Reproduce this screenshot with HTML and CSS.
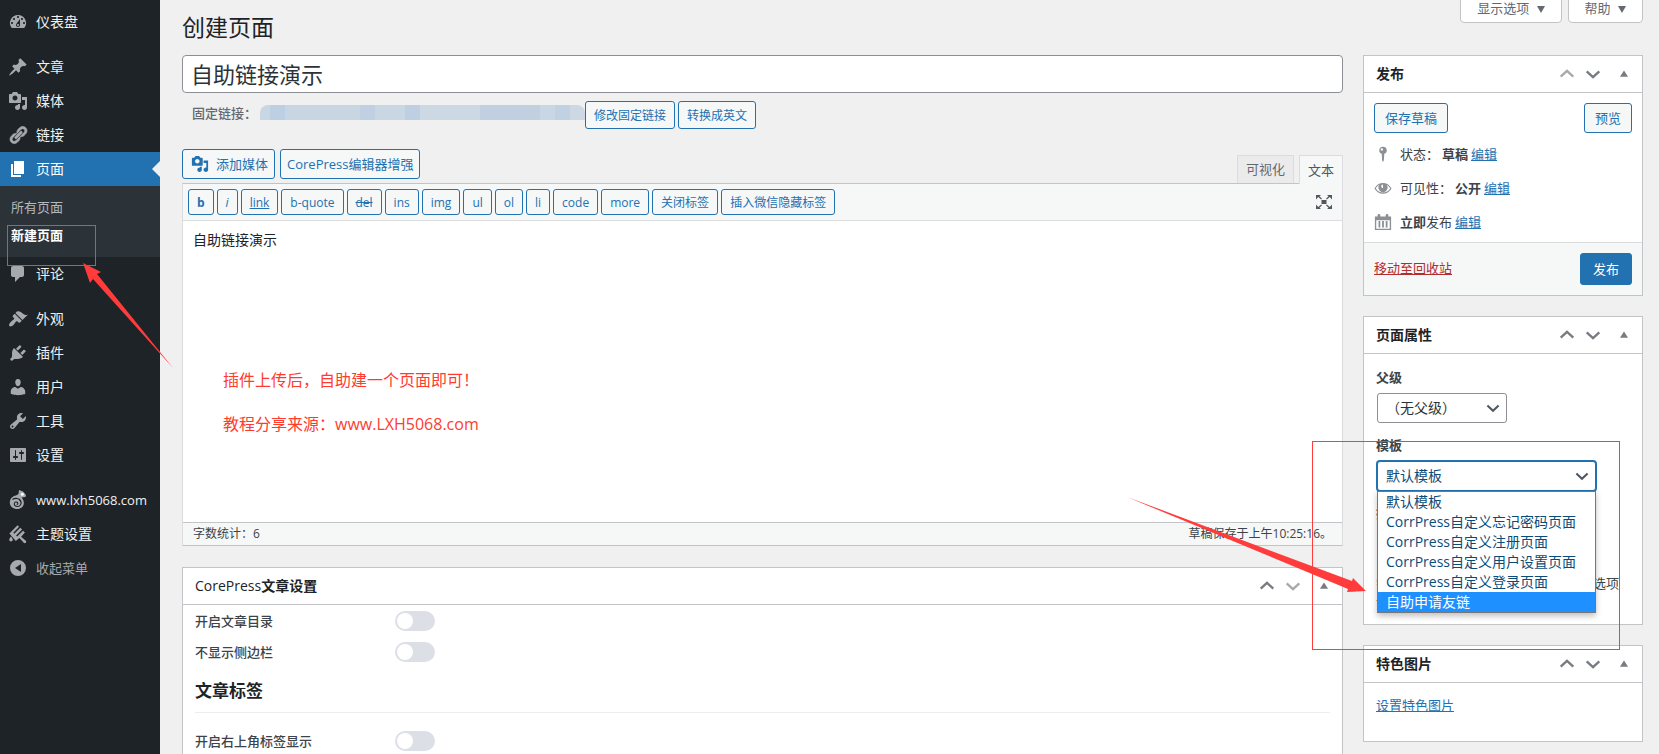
FILE: index.html
```html
<!DOCTYPE html>
<html lang="zh-CN">
<head>
  <meta charset="UTF-8">
  <meta name="viewport" content="width=device-width, initial-scale=1.0">
  <title>创建页面</title>
  <link rel="stylesheet" href="styles.css">
</head>
<body>

<!-- shared icons -->
<svg class="sprite" aria-hidden="true">
  <symbol id="media" viewBox="0 0 20 20"><path d="M13 11V4c0-.55-.45-1-1-1h-1.67L9 1H5L3.67 3H2c-.55 0-1 .45-1 1v7c0 .55.45 1 1 1h10c.55 0 1-.45 1-1zM7 4.5c1.38 0 2.5 1.12 2.5 2.5S8.38 9.5 7 9.5 4.5 8.38 4.5 7 5.62 4.5 7 4.5zM14 6h5v10.5c0 1.38-1.12 2.5-2.5 2.5S14 17.88 14 16.5s1.12-2.5 2.5-2.5c.17 0 .34.02.5.05V9h-3V6zm-4 8.05V13h2v3.5c0 1.38-1.12 2.5-2.5 2.5S7 17.88 7 16.5 8.12 14 9.5 14c.17 0 .34.02.5.05z"/></symbol>
  <symbol id="up" viewBox="0 0 20 20"><path d="M3 13l7-6.500 7 6.500" fill="none" stroke="currentColor" stroke-width="2.6"/></symbol>
  <symbol id="down" viewBox="0 0 20 20"><path d="M3 7l7 6.500L17 7" fill="none" stroke="currentColor" stroke-width="2.6"/></symbol>
  <symbol id="toggle" viewBox="0 0 20 20"><path d="M5.500 13L10 6l4.500 7z"/></symbol>
</svg>

<div class="layout">
  <nav class="menu">
    <a class="menu-item" href="#"><svg class="icon" viewBox="0 0 20 20"><path d="M3.76 16h12.48A7.998 7.998 0 0 0 10 3a7.998 7.998 0 0 0-6.24 13zM10 4c.55 0 1 .45 1 1s-.45 1-1 1-1-.45-1-1 .45-1 1-1zM6 6c.55 0 1 .45 1 1s-.45 1-1 1-1-.45-1-1 .45-1 1-1zm8 0c.55 0 1 .45 1 1s-.45 1-1 1-1-.45-1-1 .45-1 1-1zm-5.37 5.55L12 7v6c0 1.1-.9 2-2 2s-2-.9-2-2c0-.57.24-1.08.63-1.45zM4 10c.55 0 1 .45 1 1s-.45 1-1 1-1-.45-1-1 .45-1 1-1zm12 0c.55 0 1 .45 1 1s-.45 1-1 1-1-.45-1-1 .45-1 1-1zm-5 3c0-.55-.45-1-1-1s-1 .45-1 1 .45 1 1 1 1-.45 1-1z"/></svg>仪表盘</a>
    <div class="separator"></div>
    <a class="menu-item" href="#"><svg class="icon" viewBox="0 0 20 20"><path d="M10.44 3.02l1.82-1.82 6.36 6.35-1.83 1.82c-1.05-.68-2.48-.57-3.41.36l-.75.75c-.92.93-1.04 2.35-.35 3.41l-1.83 1.82-2.41-2.41-2.8 2.79c-.42.42-3.38 2.71-3.8 2.29s1.86-3.39 2.28-3.81l2.79-2.79L4.1 9.36l1.83-1.82c1.05.69 2.48.57 3.4-.36l.75-.75c.93-.92 1.05-2.35.36-3.41z"/></svg>文章</a>
    <a class="menu-item" href="#"><svg class="icon"><use href="#media"/></svg>媒体</a>
    <a class="menu-item" href="#"><svg class="icon" viewBox="0 0 20 20"><path stroke="currentColor" stroke-width=".7" d="M17.74 2.76c1.68 1.69 1.68 4.41 0 6.1l-1.53 1.52c-1.12 1.12-2.7 1.47-4.14 1.09l2.62-2.61.76-.77.76-.76c.84-.84.84-2.2 0-3.04-.84-.85-2.2-.85-3.04 0l-.77.76-3.38 3.38c-.37-1.44-.02-3.02 1.1-4.14l1.52-1.53c1.69-1.68 4.42-1.68 6.1 0zM8.59 13.43l5.34-5.34c.42-.42.42-1.1 0-1.52-.44-.43-1.13-.39-1.53 0l-5.33 5.34c-.42.42-.42 1.1 0 1.52.44.43 1.13.39 1.52 0zm-.76 2.29l4.14-4.15c.38 1.44.03 3.02-1.09 4.14l-1.52 1.53c-1.69 1.68-4.41 1.68-6.1 0-1.68-1.68-1.68-4.42 0-6.1l1.53-1.52c1.12-1.12 2.7-1.47 4.14-1.1l-4.14 4.15c-.85.84-.85 2.2 0 3.05.84.84 2.2.84 3.04 0z"/></svg>链接</a>
    <a class="menu-item current" href="#"><svg class="icon" viewBox="0 0 20 20"><path d="M6 15V2h10v13H6zm-1 1h8v2H3V5h2v11z"/></svg>页面</a>
    <div class="submenu">
      <a class="submenu-item" href="#">所有页面</a>
      <a class="submenu-item active" href="#">新建页面</a>
    </div>
    <a class="menu-item" href="#"><svg class="icon" viewBox="0 0 20 20"><path d="M5 2h9c1.1 0 2 .9 2 2v7c0 1.1-.9 2-2 2h-2l-5 5v-5H5c-1.1 0-2-.9-2-2V4c0-1.1.9-2 2-2z"/></svg>评论</a>
    <div class="separator"></div>
    <a class="menu-item" href="#"><svg class="icon" viewBox="0 0 20 20"><path d="M14.48 11.06L7.41 3.99l1.5-1.5c.5-.56 2.3-.47 3.51.32 1.21.8 1.43 1.28 2.91 2.1 1.18.64 2.45 1.26 4.45.85zm-.71.71L6.7 4.7 4.93 6.47c-.39.39-.39 1.02 0 1.41l1.06 1.06c.39.39.39 1.03 0 1.42-.6.6-1.43 1.11-2.21 1.69-.35.26-.7.53-1.01.84C1.43 14.23.4 16.08 1.4 17.07c.99 1 2.84-.03 4.18-1.36.31-.31.58-.66.85-1.02.57-.78 1.08-1.61 1.69-2.21.39-.39 1.02-.39 1.41 0l1.06 1.06c.39.39 1.02.39 1.41 0z"/></svg>外观</a>
    <a class="menu-item" href="#"><svg class="icon" viewBox="0 0 20 20"><path d="M13.11 4.36L9.87 7.6 8 5.73l3.24-3.24c.35-.34 1.05-.2 1.56.32.52.51.66 1.21.31 1.55zm-8 1.77l.91-1.12 9.01 9.01-1.19.84c-.71.71-2.63 1.16-3.82 1.16H6.14L4.9 17.26c-.59.59-1.54.59-2.12 0-.59-.58-.59-1.53 0-2.12l1.24-1.24v-3.88c0-1.13.4-3.19 1.09-3.89zm7.26 3.97l3.24-3.24c.34-.35 1.04-.21 1.55.31.52.51.66 1.21.31 1.55l-3.24 3.25z"/></svg>插件</a>
    <a class="menu-item" href="#"><svg class="icon" viewBox="0 0 20 20"><path d="M10 9.25c-2.27 0-2.73-3.44-2.73-3.44C7 4.02 7.82 2 9.97 2c2.16 0 2.98 2.02 2.71 3.81 0 0-.41 3.44-2.68 3.44zm0 2.57L12.72 10c2.39 0 4.52 2.33 4.52 4.53v2.49s-3.65 1.13-7.24 1.13c-3.65 0-7.24-1.13-7.24-1.13v-2.49c0-2.25 1.94-4.48 4.47-4.48z"/></svg>用户</a>
    <a class="menu-item" href="#"><svg class="icon" viewBox="0 0 20 20"><path d="M16.68 9.77c-1.34 1.34-3.3 1.67-4.95.99l-5.41 6.52c-.99.99-2.59.99-3.58 0s-.99-2.59 0-3.57l6.52-5.42c-.68-1.65-.35-3.61.99-4.95 1.28-1.28 3.12-1.62 4.72-1.06l-2.89 2.89 2.82 2.82 2.86-2.87c.53 1.58.18 3.39-1.08 4.65zM3.81 16.21c.4.39 1.04.39 1.43 0 .4-.4.4-1.04 0-1.43-.39-.4-1.03-.4-1.43 0-.39.39-.39 1.03 0 1.43z"/></svg>工具</a>
    <a class="menu-item" href="#"><svg class="icon" viewBox="0 0 20 20"><path d="M18 16V4c0-.55-.45-1-1-1H3c-.55 0-1 .45-1 1v12c0 .55.45 1 1 1h14c.55 0 1-.45 1-1zM8 11h1c.55 0 1 .45 1 1s-.45 1-1 1H8v1.5c0 .28-.22.5-.5.5s-.5-.22-.5-.5V13H6c-.55 0-1-.45-1-1s.45-1 1-1h1V5.500c0-.28.22-.5.5-.5s.5.22.5.5V11zm5-2h-1c-.55 0-1-.45-1-1s.45-1 1-1h1V5.500c0-.28.22-.5.5-.5s.5.22.5.5V7h1c.55 0 1 .45 1 1s-.45 1-1 1h-1v5.500c0 .28-.22.5-.5.5s-.5-.22-.5-.5V9z"/></svg>设置</a>
    <div class="separator"></div>
    <a class="menu-item site" href="#"><svg class="icon" viewBox="0 0 20 20"><path d="M11 0l4 1.500 3 3.500-.5 2-4 .5c1.500 1.500 2.500 3.500 2.300 6-.3 3.200-3 5.500-6.300 5.500C5 19 1.700 16.300 1.800 12.500 2 8.500 4.500 6 8 5.500L10.500 4z"/><circle cx="14.300" cy="4.200" r="1.500" fill="#fff"/><path d="M4.500 9.500c2.500-1.800 7-1.300 8.200 1.200 1.200 2.800-.4 5.800-3.200 5.800-2.300 0-3.500-1.500-3.200-3 .3-1.400 2.200-2 3.200-1 .8.900.1 2-.8 1.900M11 9l2.500 4" fill="none" stroke="#1d2327" stroke-width="1.100"/></svg>www.lxh5068.com</a>
    <a class="menu-item" href="#"><svg class="icon" viewBox="0 0 20 20"><path d="M9.500 1.200l1.600 1.600-5.800 5.900 1 1L12.300 3.800l1.800 1.800-6 6 1 1 6-5.900 1.800 1.800-3.800 4.200 5 4.300c.6 1.500-.8 2.600-2.100 2l-4.600-5-3.600 3.100-6.400-7.700zM3 12.600c1.200 1.600 1.800 2.500 1.800 3.200a1.800 1.800 0 0 1-3.600 0c0-.7.600-1.600 1.800-3.200z"/></svg>主题设置</a>
    <a class="menu-item collapse" href="#"><svg class="icon" viewBox="0 0 20 20"><path fill-rule="evenodd" d="M10 2a8 8 0 1 1 0 16 8 8 0 0 1 0-16zm3 4v8l-6-4z"/></svg>收起菜单</a>

    <div class="mark mark-menu"></div>
    <svg class="arrow arrow-menu" viewBox="0 0 92 106"><path d="M0 0l18 9-4 2 76 94-80-89-3 4z"/></svg>
  </nav>

  <main class="content">
    <header class="page-head">
      <h1 class="page-title">创建页面</h1>
      <div class="screen-links">
        <button class="screen-button">显示选项 <svg class="caret" viewBox="0 0 8 7"><path d="M0 0h8L4 7z"/></svg></button>
        <button class="screen-button">帮助 <svg class="caret" viewBox="0 0 8 7"><path d="M0 0h8L4 7z"/></svg></button>
      </div>
    </header>

    <div class="columns">
      <div class="primary">
        <input class="title-input" type="text" value="自助链接演示" aria-label="标题">

        <div class="permalink">
          <span class="permalink-label">固定链接：</span>
          <span class="permalink-url"></span>
          <button class="button tiny">修改固定链接</button>
          <button class="button tiny">转换成英文</button>
        </div>

        <div class="editor-tools">
          <button class="button"><svg class="button-icon"><use href="#media"/></svg>添加媒体</button>
          <button class="button">CorePress编辑器增强</button>
          <div class="tabs">
            <button class="tab">可视化</button>
            <button class="tab active">文本</button>
          </div>
        </div>

        <div class="editor">
          <div class="toolbar">
            <button class="button small"><b>b</b></button>
            <button class="button small"><i>i</i></button>
            <button class="button small"><u>link</u></button>
            <button class="button small">b-quote</button>
            <button class="button small"><del>del</del></button>
            <button class="button small">ins</button>
            <button class="button small">img</button>
            <button class="button small">ul</button>
            <button class="button small">ol</button>
            <button class="button small">li</button>
            <button class="button small">code</button>
            <button class="button small">more</button>
            <button class="button small">关闭标签</button>
            <button class="button small">插入微信隐藏标签</button>
            <button class="fullscreen" aria-label="全屏"><svg viewBox="0 0 20 20"><path d="M7.500 8h5v4h-5zM2 3h5L5.500 4.300 8 6.800l-.8.800-3-2.500L2 7.500zM18 3v4.500l-2.200-2.400-3 2.500-.8-.8 2.500-2.500L13 3zM2 17v-4.500l2.200 2.400 3-2.500.8.800-2.500 2.500L7 17zM18 17h-5l1.500-1.300-2.500-2.500.8-.8 3 2.500 2.200-2.400z"/></svg></button>
          </div>
          <textarea class="editor-text" aria-label="正文">自助链接演示</textarea>
          <div class="notes">
            <p>插件上传后，自助建一个页面即可！</p>
            <p>教程分享来源：www.LXH5068.com</p>
          </div>
          <div class="status-bar">
            <span>字数统计：6</span>
            <span>草稿保存于上午10:25:16。</span>
          </div>
        </div>

        <section class="card">
          <div class="card-head">
            <h2 class="card-title"><span class="latin">CorePress</span>文章设置</h2>
            <button class="handle" aria-label="上移"><svg><use href="#up"/></svg></button>
            <button class="handle muted" aria-label="下移"><svg><use href="#down"/></svg></button>
            <button class="handle toggle" aria-label="折叠"><svg><use href="#toggle"/></svg></button>
          </div>
          <div class="settings">
            <div class="setting"><label for="toc">开启文章目录</label><input class="switch" type="checkbox" id="toc"></div>
            <div class="setting"><label for="side">不显示侧边栏</label><input class="switch" type="checkbox" id="side"></div>
            <h3 class="settings-title">文章标签</h3>
            <div class="setting"><label for="corner">开启右上角标签显示</label><input class="switch" type="checkbox" id="corner"></div>
          </div>
        </section>
      </div>

      <aside class="secondary">
        <section class="card">
          <div class="card-head">
            <h2 class="card-title">发布</h2>
            <button class="handle muted" aria-label="上移"><svg><use href="#up"/></svg></button>
            <button class="handle" aria-label="下移"><svg><use href="#down"/></svg></button>
            <button class="handle toggle" aria-label="折叠"><svg><use href="#toggle"/></svg></button>
          </div>
          <div class="publish">
            <div class="publish-actions">
              <button class="button">保存草稿</button>
              <button class="button">预览</button>
            </div>
            <div class="publish-row"><svg class="row-icon" viewBox="0 0 20 20"><path fill-rule="evenodd" d="M10 2a4 4 0 0 1 1.400 7.800L11 17l-1 2-1-2-.4-7.200A4 4 0 0 1 10 2zM8.700 3.600a1.300 1.300 0 1 0 0 2.600 1.300 1.300 0 0 0 0-2.600z"/></svg><span class="row-name">状态：</span><b>草稿</b> <a href="#">编辑</a></div>
            <div class="publish-row"><svg class="row-icon" viewBox="0 0 20 20"><path fill-rule="evenodd" d="M10 4.500c4 0 7 2 9.500 6-2.500 4-5.500 6-9.500 6s-7-2-9.500-6c2.500-4 5.500-6 9.500-6zm-4 2C4.300 7.300 3 8.700 2 10.500c2 3 4.500 4.500 8 4.500s6-1.500 8-4.500c-1-1.800-2.300-3.200-4-4a5 5 0 1 1-8 0zM10 6a2 2 0 0 0-2 2c0 1 1 2 2 2z"/></svg><span class="row-name">可见性：</span><b>公开</b> <a href="#">编辑</a></div>
            <div class="publish-row"><svg class="row-icon" viewBox="0 0 20 20"><path fill-rule="evenodd" d="M1 4h3V2.500a1.500 1.500 0 0 1 3 0V4h6V2.500a1.500 1.500 0 0 1 3 0V4h3v15H1zm1.500 4v9.500h15V8zM5 9h2v7H5zm4 0h2v7H9zm4 0h2v7h-2z"/></svg><b>立即</b>发布 <a href="#">编辑</a></div>
          </div>
          <div class="publish-foot">
            <a class="delete" href="#">移动至回收站</a>
            <button class="button primary-button">发布</button>
          </div>
        </section>

        <section class="card attributes">
          <div class="card-head">
            <h2 class="card-title">页面属性</h2>
            <button class="handle" aria-label="上移"><svg><use href="#up"/></svg></button>
            <button class="handle" aria-label="下移"><svg><use href="#down"/></svg></button>
            <button class="handle toggle" aria-label="折叠"><svg><use href="#toggle"/></svg></button>
          </div>
          <div class="fields">
            <label for="parent">父级</label>
            <div class="select-box parent">
              <select id="parent"><option>（无父级）</option></select>
              <svg class="select-arrow"><use href="#down"/></svg>
            </div>
            <label for="template">模板</label>
            <div class="select-box template">
              <select id="template"><option>默认模板</option></select>
              <svg class="select-arrow"><use href="#down"/></svg>
              <ul class="options">
                <li>默认模板</li>
                <li>CorrPress自定义忘记密码页面</li>
                <li>CorrPress自定义注册页面</li>
                <li>CorrPress自定义用户设置页面</li>
                <li>CorrPress自定义登录页面</li>
                <li class="selected">自助申请友链</li>
              </ul>
            </div>
            <label for="order">排序</label>
            <input class="order" type="text" id="order" value="0">
            <p class="help">需要帮助？使用页面标题上方的“帮助”选项卡。</p>
          </div>
          <div class="mark mark-template"></div>
          <svg class="arrow arrow-template" viewBox="0 0 240 96"><path d="M0 0l225 84 1-3 13 13-19 1 1-3z"/></svg>
        </section>

        <section class="card">
          <div class="card-head">
            <h2 class="card-title">特色图片</h2>
            <button class="handle" aria-label="上移"><svg><use href="#up"/></svg></button>
            <button class="handle" aria-label="下移"><svg><use href="#down"/></svg></button>
            <button class="handle toggle" aria-label="折叠"><svg><use href="#toggle"/></svg></button>
          </div>
          <div class="featured"><a href="#">设置特色图片</a></div>
        </section>
      </aside>
    </div>
  </main>
</div>

</body>
</html>
```
FILE: styles.css
```css
* {
  box-sizing: border-box;
}

body {
  margin: 0;
  background: #f0f0f1;
  color: #3c434a;
  font-family: "Open Sans", "Noto Sans CJK SC", sans-serif;
  font-size: 13px;
  line-height: 20px;
}

button,
input,
select,
textarea {
  margin: 0;
  font-family: inherit;
}

button {
  cursor: pointer;
}

h1,
h2,
h3,
p,
ul {
  margin: 0;
  padding: 0;
}

a {
  color: #2271b1;
}

svg {
  fill: currentColor;
}

.sprite {
  display: none;
}

.layout {
  display: flex;
  height: 100vh;
  overflow: hidden;
}

/* left menu */
.menu {
  position: relative;
  flex: 0 0 160px;
  padding-top: 5px;
  background: #1d2327;
}

.menu-item {
  display: flex;
  align-items: center;
  gap: 8px;
  height: 34px;
  padding-left: 8px;
  color: #f0f0f1;
  font-size: 14px;
  text-decoration: none;
  white-space: nowrap;
}

.icon {
  flex: none;
  width: 20px;
  height: 20px;
  color: #a7aaad;
}

.menu-item.current {
  position: relative;
  background: #2271b1;
  color: #fff;
}

.menu-item.current .icon {
  color: #fff;
}

.menu-item.current::after {
  content: "";
  position: absolute;
  right: 0;
  top: 9px;
  border: 8px solid transparent;
  border-left: 0;
  border-right-color: #f0f0f1;
}

.menu-item.site {
  font-size: 13px;
}

.menu-item.collapse {
  color: #a7aaad;
  font-size: 13px;
}

.separator {
  height: 11px;
}

.submenu {
  padding: 7px 0 8px;
  background: #2c3338;
}

.submenu-item {
  display: block;
  padding-left: 11px;
  color: #b4b9be;
  line-height: 28px;
  text-decoration: none;
}

.submenu-item.active {
  color: #fff;
  font-weight: 600;
}

/* page */
.content {
  flex: 1;
  min-width: 0;
  padding: 0 16px 0 22px;
}

.page-head {
  display: flex;
  justify-content: space-between;
  height: 55px;
}

.page-title {
  color: #1d2327;
  font-size: 23px;
  font-weight: 400;
  line-height: 54px;
}

.screen-links {
  display: flex;
  align-items: flex-start;
  gap: 6px;
  margin-top: -7px;
}

.screen-button {
  height: 30px;
  padding: 0 16px 2px;
  border: 1px solid #c3c4c7;
  border-radius: 0 0 4px 4px;
  background: #fff;
  color: #646970;
  font-size: 13px;
}

.caret {
  width: 8px;
  height: 7px;
  margin-left: 4px;
}

.columns {
  display: flex;
  gap: 20px;
}

.primary {
  flex: 1;
  min-width: 0;
}

.secondary {
  flex: 0 0 280px;
}

.title-input {
  display: block;
  width: 100%;
  height: 38px;
  padding: 0 8px 2px;
  border: 1px solid #8c8f94;
  border-radius: 4px;
  background: #fff;
  color: #2c3338;
  font-size: 22px;
}

.permalink {
  display: flex;
  align-items: flex-start;
  margin: 8px 0 20px;
  padding-left: 10px;
}

.permalink-label {
  flex: 0 0 68px;
  color: #646970;
  font-weight: 500;
  line-height: 24px;
}

.permalink-url {
  flex: 0 0 325px;
  height: 15px;
  margin-top: 4px;
  border-radius: 8px 8px 0 0;
  background: linear-gradient(90deg, #c9d7e5 10px, #bdcfe2 10px 25px, #c8d6e4 25px 100px, #bfd0e2 100px 115px, #c9d7e5 115px 145px, #becfe1 145px 160px, #ccd8e4 160px 220px, #c0d0e1 220px 280px, #c9d6e4 280px 295px, #c0d1e2 295px 310px, #cdd8e5 310px);
}

.button {
  height: 30px;
  padding: 0 10px 2px;
  border: 1px solid #2271b1;
  border-radius: 3px;
  background: #f6f7f7;
  color: #2271b1;
  font-size: 13px;
  white-space: nowrap;
}

.button.tiny {
  height: 28px;
  margin-right: 3px;
  padding: 0 8px;
  font-size: 12px;
}

.button.small {
  height: 26px;
  padding: 0 8px;
  font-size: 12px;
}

.editor-tools {
  display: flex;
  gap: 5px;
}

.editor-tools > .button {
  display: flex;
  align-items: center;
  margin-bottom: 4px;
  padding: 0 6px 2px;
}

.button-icon {
  width: 18px;
  height: 18px;
  margin: 1px 7px 0 2px;
}

.tabs {
  display: flex;
  align-items: flex-end;
  gap: 5px;
  margin-left: auto;
}

.tab {
  position: relative;
  height: 28px;
  padding: 0 8px 2px;
  border: 1px solid #dcdcde;
  border-bottom: 0;
  background: #ebebec;
  color: #646970;
  font-size: 13px;
}

.tab.active {
  z-index: 1;
  height: 29px;
  margin-bottom: -1px;
  background: #f6f7f7;
  color: #50575e;
}

/* editor */
.editor {
  position: relative;
  margin-bottom: 21px;
  border: 1px solid #dcdcde;
  border-top-color: #c3c4c7;
  border-bottom-color: #c3c4c7;
}

.toolbar {
  display: flex;
  flex-wrap: wrap;
  gap: 3px;
  padding: 5px;
  border-bottom: 1px solid #dcdcde;
  background: #f6f7f7;
}

.fullscreen {
  width: 26px;
  height: 26px;
  margin-left: auto;
  padding: 3px;
  border: 0;
  background: none;
  color: #50575e;
}

.fullscreen svg {
  display: block;
  width: 20px;
  height: 20px;
}

.editor-text {
  display: block;
  width: 100%;
  height: 301px;
  padding: 9px 10px;
  border: 0;
  outline: 0;
  background: #fff;
  color: #1d2327;
  font-size: 14px;
  line-height: 20px;
  resize: none;
}

.notes {
  position: absolute;
  left: 40px;
  top: 174px;
  color: #ff3b30;
  font-size: 16px;
  line-height: 44px;
  pointer-events: none;
}

.status-bar {
  display: flex;
  justify-content: space-between;
  padding: 1px 10px;
  border-top: 1px solid #c3c4c7;
  background: #f6f7f7;
  font-size: 12px;
}

/* cards */
.card {
  margin-bottom: 20px;
  border: 1px solid #c3c4c7;
  background: #fff;
}

.card-head {
  display: flex;
  align-items: center;
  height: 37px;
  border-bottom: 1px solid #c3c4c7;
}

.card-title {
  flex: 1;
  padding-left: 12px;
  color: #1d2327;
  font-size: 14px;
  font-weight: 600;
}

.latin {
  font-weight: 400;
}

.handle {
  width: 26px;
  height: 36px;
  padding: 0 4px;
  border: 0;
  background: none;
  color: #787c82;
}

.handle.muted {
  color: #a7aaad;
}

.handle.toggle {
  width: 36px;
  padding: 0 9px;
}

.handle svg {
  display: block;
  width: 18px;
  height: 18px;
}

.settings {
  padding: 0 12px 20px;
}

.setting {
  display: flex;
  align-items: center;
  height: 31px;
  font-weight: 500;
}

.setting label {
  flex: 0 0 200px;
}

.switch {
  appearance: none;
  width: 40px;
  height: 20px;
  padding: 2px;
  border-radius: 10px;
  background: #dcdfe6;
}

.switch::before {
  content: "";
  display: block;
  width: 16px;
  height: 16px;
  border-radius: 50%;
  background: #fff;
}

.switch:checked {
  background: #409eff;
}

.settings-title {
  margin-bottom: 12px;
  padding: 12px 0 9px;
  border-bottom: 1px solid #ebeef0;
  color: #1d2327;
  font-size: 17px;
  font-weight: 600;
  line-height: 24px;
}

/* publish box */
.publish {
  padding: 10px 10px 3px;
}

.publish-actions,
.publish-foot {
  display: flex;
  align-items: center;
  justify-content: space-between;
}

.publish-actions {
  margin-bottom: 4px;
}

.publish-row {
  display: flex;
  align-items: center;
  height: 34px;
}

.publish-row b {
  font-weight: 600;
}

.publish-row a {
  margin-left: 3px;
}

.row-icon {
  width: 18px;
  height: 18px;
  margin-right: 8px;
  color: #8c8f94;
}

.row-name {
  margin-right: 3px;
}

.publish-foot {
  padding: 10px;
  border-top: 1px solid #dcdcde;
  background: #f6f7f7;
}

.delete {
  padding-bottom: 3px;
  color: #b32d2e;
}

.button.primary-button {
  height: 32px;
  padding: 0 12px 2px;
  background: #2271b1;
  color: #fff;
}

/* page attributes */
.attributes {
  position: relative;
}

.fields {
  padding: 13px 12px 14px;
}

.fields label {
  display: block;
  margin-bottom: 6px;
  font-weight: 600;
}

.select-box {
  position: relative;
  height: 30px;
  margin: 0 1px 12px;
}

.select-box.parent {
  width: 130px;
}

.select-box.template {
  width: 219px;
}

.select-box select {
  appearance: none;
  width: 100%;
  height: 30px;
  padding: 0 24px 2px 8px;
  border: 1px solid #8c8f94;
  border-radius: 3px;
  background: #fff;
  color: #2c3338;
  font-size: 14px;
}

.select-box.template select {
  border-color: #2271b1;
  outline: 0;
  box-shadow: 0 0 0 1px #2271b1;
  color: #0a4b78;
}

.select-arrow {
  position: absolute;
  right: 6px;
  top: 7px;
  width: 16px;
  height: 16px;
  color: #50575e;
  pointer-events: none;
}

.options {
  position: absolute;
  z-index: 1;
  left: 0;
  right: 0;
  top: 30px;
  border: 1px solid #767676;
  background: #fff;
  box-shadow: 0 3px 6px rgba(0, 0, 0, 0.25);
  color: #0a4b78;
  font-size: 14px;
  line-height: 20px;
  list-style: none;
  white-space: nowrap;
}

.options li {
  padding-left: 8px;
}

.options .selected {
  background: #1e90ff;
  color: #fff;
}

.order {
  display: block;
  width: 60px;
  height: 30px;
  margin: 0 1px 15px;
  border: 1px solid #8c8f94;
  border-radius: 3px;
}

.help {
  line-height: 18px;
}

.featured {
  height: 58px;
  padding: 12px;
}

/* red marks */
.mark {
  position: absolute;
  z-index: 2;
  border: 1px solid #ff3b3b;
  pointer-events: none;
}

.mark-menu {
  left: 7px;
  top: 225px;
  width: 89px;
  height: 41px;
}

.mark-template {
  left: -52px;
  top: 124px;
  width: 308px;
  height: 209px;
}

.arrow {
  position: absolute;
  z-index: 2;
  color: #ff3b3b;
  pointer-events: none;
}

.arrow-menu {
  left: 83px;
  top: 263px;
  width: 92px;
  height: 106px;
}

.arrow-template {
  left: -237px;
  top: 180px;
  width: 240px;
  height: 96px;
}
```
